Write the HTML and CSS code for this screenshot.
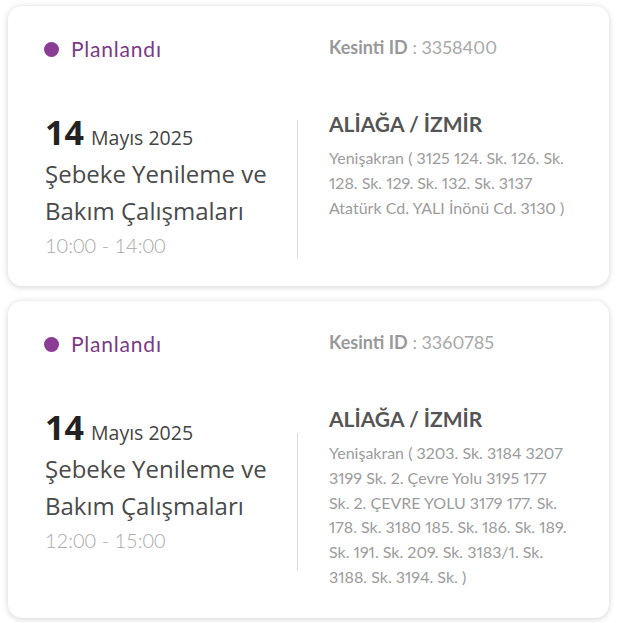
FILE: index.html
```html
<!DOCTYPE html>
<html lang="tr">
<head>
<meta charset="utf-8">
<title>Kesintiler</title>
<link rel="stylesheet" href="styles.css">
</head>
<body>
<div class="list">
  <div class="card">
    <div class="status"><span class="dot"></span>Planlandı</div>
    <div class="kid"><b>Kesinti ID</b> : 3358400</div>
    <div class="when">
      <div class="date"><span class="day">14</span> <span class="month">Mayıs 2025</span></div>
      <div class="title">Şebeke Yenileme ve Bakım Çalışmaları</div>
      <div class="time">10:00 - 14:00</div>
    </div>
    <div class="sep"></div>
    <div class="where">
      <div class="city">ALİAĞA / İZMİR</div>
      <div class="addr">Yenişakran ( 3125 124. Sk. 126. Sk. 128. Sk. 129. Sk. 132. Sk. 3137 Atatürk Cd. YALI İnönü Cd. 3130 )</div>
    </div>
  </div>
  <div class="card">
    <div class="status"><span class="dot"></span>Planlandı</div>
    <div class="kid"><b>Kesinti ID</b> : 3360785</div>
    <div class="when">
      <div class="date"><span class="day">14</span> <span class="month">Mayıs 2025</span></div>
      <div class="title">Şebeke Yenileme ve Bakım Çalışmaları</div>
      <div class="time">12:00 - 15:00</div>
    </div>
    <div class="sep"></div>
    <div class="where">
      <div class="city">ALİAĞA / İZMİR</div>
      <div class="addr">Yenişakran ( 3203. Sk. 3184 3207 3199 Sk. 2. Çevre Yolu 3195 177 Sk. 2. ÇEVRE YOLU 3179 177. Sk. 178. Sk. 3180 185. Sk. 186. Sk. 189. Sk. 191. Sk. 209. Sk. 3183/1. Sk. 3188. Sk. 3194. Sk. )</div>
    </div>
  </div>
</div>
</body>
</html>
```
FILE: styles.css
```css
* { box-sizing: border-box; }
body {
  margin: 0;
  background: #ffffff;
  font-family: "Lato", "Noto Sans", sans-serif;
}
.list {
  display: flex;
  flex-direction: column;
  gap: 15px;
  padding: 6px 11px 6px 8px;
}
.card {
  background: #fff;
  border-radius: 14px;
  box-shadow: 0 1px 6px rgba(0, 0, 0, 0.18);
  display: grid;
  grid-template-columns: 252px 1px 1fr;
  row-gap: 57px;
  padding: 29px 30px 28px 37px;
  align-items: start;
}
.status {
  display: flex;
  align-items: center;
  height: 28px;
  line-height: 28px;
  font-size: 21px;
  letter-spacing: 0.8px;
  color: #7a3a87;
}
.dot {
  width: 15px;
  height: 15px;
  border-radius: 50%;
  background: #8b3d96;
  margin-right: 12px;
  margin-left: -1px;
}
.kid {
  grid-column: 2 / 4;
  padding-left: 32px;
  font-size: 18px;
  line-height: 24px;
  color: #a8a8a8;
  font-variant-numeric: proportional-nums;
}
.kid b {
  color: #999;
  font-weight: 700;
}
.when {
  height: 138px;
}
.sep {
  align-self: center;
  height: 138px;
  background: #dcdcdc;
}
.date {
  line-height: 24px;
  font-family: "Open Sans", sans-serif;
  color: #222;
}
.day {
  font-size: 34px;
  font-weight: 700;
}
.month {
  margin-left: 3px;
  font-size: 19.5px;
  color: #444;
}
.title {
  margin-top: 4px;
  font-family: "Open Sans", sans-serif;
  font-size: 24px;
  line-height: 37px;
  color: #4a4a4a;
}
.time {
  margin-top: 4px;
  font-size: 20px;
  line-height: 24px;
  font-weight: 300;
  color: #aaa;
}
.where {
  padding-left: 31px;
  margin-top: -8px;
}
.city {
  font-size: 21px;
  line-height: 24px;
  font-weight: 700;
  color: #555;
}
.addr {
  margin-top: 10px;
  font-size: 16px;
  line-height: 24.8px;
  color: #9c9c9c;
  max-width: 242px;
  font-variant-numeric: proportional-nums;
}
```
